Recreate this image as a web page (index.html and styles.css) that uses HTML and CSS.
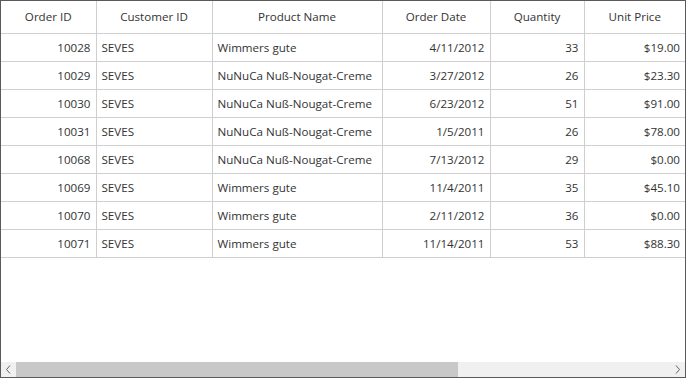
FILE: index.html
```html
<!DOCTYPE html>
<html lang="en">
<head>
  <meta charset="UTF-8" />
  <title>Orders Grid</title>
  <link rel="stylesheet" href="styles.css">
</head>
<body>
  <div class="grid-frame">
    <div class="grid-view">
      <table class="grid">
        <colgroup>
          <col style="width: 95px">
          <col style="width: 116px">
          <col style="width: 170px">
          <col style="width: 108px">
          <col style="width: 94px">
          <col style="width: 101px">
        </colgroup>
        <thead>
          <tr>
            <th>Order ID</th>
            <th>Customer ID</th>
            <th>Product Name</th>
            <th>Order Date</th>
            <th>Quantity</th>
            <th>Unit Price</th>
          </tr>
        </thead>
        <tbody id="gridBody"></tbody>
      </table>
    </div>
    <div class="hscroll">
      <span class="arrow">
        <svg width="15" height="15" viewBox="0 0 15 15"><path d="M9 3.5 L5.5 7.5 L9 11.5" fill="none" stroke="#606060" stroke-width="1"/></svg>
      </span>
      <div class="track"><div class="thumb"></div></div>
      <span class="arrow">
        <svg width="15" height="15" viewBox="0 0 15 15"><path d="M6 3.5 L9.5 7.5 L6 11.5" fill="none" stroke="#606060" stroke-width="1"/></svg>
      </span>
    </div>
  </div>
  <script>
    const orders = [
      [10028, 'SEVES', 'Wimmers gute', '4/11/2012', 33, '$19.00'],
      [10029, 'SEVES', 'NuNuCa Nuß-Nougat-Creme', '3/27/2012', 26, '$23.30'],
      [10030, 'SEVES', 'NuNuCa Nuß-Nougat-Creme', '6/23/2012', 51, '$91.00'],
      [10031, 'SEVES', 'NuNuCa Nuß-Nougat-Creme', '1/5/2011', 26, '$78.00'],
      [10068, 'SEVES', 'NuNuCa Nuß-Nougat-Creme', '7/13/2012', 29, '$0.00'],
      [10069, 'SEVES', 'Wimmers gute', '11/4/2011', 35, '$45.10'],
      [10070, 'SEVES', 'Wimmers gute', '2/11/2012', 36, '$0.00'],
      [10071, 'SEVES', 'Wimmers gute', '11/14/2011', 53, '$88.30']
    ];
    // text columns sit left, numbers and dates right
    const align = ['num', 'txt', 'txt', 'num', 'num', 'num'];
    const body = document.getElementById('gridBody');
    orders.forEach(row => {
      const tr = document.createElement('tr');
      row.forEach((val, i) => {
        const td = document.createElement('td');
        td.className = align[i];
        td.textContent = val;
        tr.appendChild(td);
      });
      body.appendChild(tr);
    });
  </script>
</body>
</html>
```
FILE: styles.css
```css
html, body {
  margin: 0;
  padding: 0;
  background: #fff;
}
.grid-frame {
  width: 686px;
  height: 378px;
  box-sizing: border-box;
  border: 1px solid #5a5a5a;
  display: flex;
  flex-direction: column;
  font-family: 'Open Sans', 'Noto Sans', sans-serif;
  font-size: 11.6px;
  color: #333;
}
.grid-view {
  flex: 1;
  overflow: hidden;
}
.grid {
  border-collapse: collapse;
  table-layout: fixed;
  width: 684px;
}
.grid th {
  height: 32px;
  padding: 0 5px;
  font-weight: normal;
  text-align: center;
  border-right: 1px solid #cfcfcf;
  border-bottom: 1px solid #cfcfcf;
  box-sizing: border-box;
}
.grid td {
  height: 28px;
  padding: 0 5px;
  white-space: nowrap;
  border-right: 1px solid #cfcfcf;
  border-bottom: 1px solid #cfcfcf;
  box-sizing: border-box;
}
.grid th:last-child, .grid td:last-child { border-right: none; }
.grid td.num { text-align: right; }
.grid td.txt { text-align: left; }

.hscroll {
  height: 15px;
  display: flex;
  background: #f0f0f0;
}
.hscroll .arrow {
  width: 15px;
  height: 15px;
  display: flex;
}
.track {
  flex: 1;
  height: 15px;
}
.thumb {
  width: 442px;
  height: 100%;
  background: #c8c8c8;
}
```
